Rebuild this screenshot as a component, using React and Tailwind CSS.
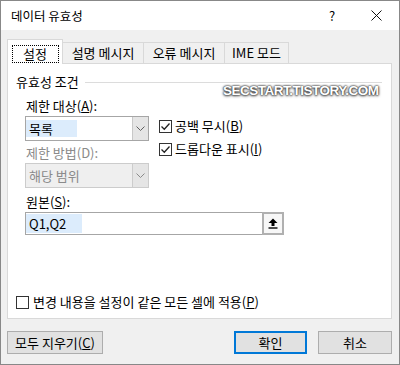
import React from 'react'

function Check({ checked }) {
  return (
    <span className="w-[13px] h-[13px] border border-[#333] bg-white flex items-center justify-center shrink-0">
      {checked && (
        <svg width="11" height="11" viewBox="0 0 11 11">
          <path d="M1.5 5.5 L4.3 8.3 L9.5 2.5" fill="none" stroke="#222" strokeWidth="1.3" />
        </svg>
      )}
    </span>
  )
}

function Chevron({ color = '#606060' }) {
  return (
    <svg width="9" height="5" viewBox="0 0 9 5">
      <path d="M0.5 0.5 L4.5 4.5 L8.5 0.5" fill="none" stroke={color} strokeWidth="1" />
    </svg>
  )
}

function Combo({ value, disabled }) {
  return (
    <div className={`h-[25px] w-[124px] flex border ${disabled ? 'border-[#cccccc] bg-[#efefef]' : 'border-[#a6a6a6] bg-white'}`}>
      <div className="flex-1 flex items-center">
        <span className={`h-[17px] w-[51px] flex items-center pl-[3px] whitespace-nowrap leading-none ${disabled ? 'text-[#8a8a8a]' : 'bg-[#dcecfc]'}`}>
          {value}
        </span>
      </div>
      <div className={`w-[16px] flex items-center justify-center border-l ${disabled ? 'border-[#cccccc] bg-[#e5e5e5]' : 'border-[#c8c8c8] bg-[#e5e5e5]'}`}>
        <Chevron color={disabled ? '#8a8a8a' : '#606060'} />
      </div>
    </div>
  )
}

export default function App() {
  return (
    <div className="w-[400px] h-[365px] border border-[#888] flex flex-col text-[13px] text-black [font-family:'Noto_Sans_CJK_KR','Malgun_Gothic',sans-serif] leading-[16px]">
      {/* Title bar */}
      <div className="h-[29px] bg-white flex items-center pl-[10px]">
        <span className="flex-1 text-[12.5px]">데이터 유효성</span>
        <span className="w-[20px] text-center mr-[24px] text-[13px]">?</span>
        <span className="w-[20px] flex justify-center mr-[13px]">
          <svg width="11" height="11" viewBox="0 0 11 11">
            <path d="M0.5 0.5 L10.5 10.5 M10.5 0.5 L0.5 10.5" stroke="#111" strokeWidth="1" />
          </svg>
        </span>
      </div>

      {/* Body */}
      <div className="flex-1 bg-[#f0f0f0] pl-[6px] pr-[7px] flex flex-col">
        {/* Tabs */}
        <div className="mt-[9px] h-[24px] flex items-end">
          <div className="relative z-10 -mb-px h-[25px] w-[56px] bg-white border border-b-0 border-[#d9d9d9] flex items-center justify-center">
            <span className="border border-dotted border-black w-[47px] h-[18px] flex items-center justify-center mt-[3px]">설정</span>
          </div>
          <div className="h-[21px] w-[81px] border border-l-0 border-b-0 border-[#d9d9d9] flex items-center justify-center">설명 메시지</div>
          <div className="h-[21px] w-[81px] border border-l-0 border-b-0 border-[#d9d9d9] flex items-center justify-center">오류 메시지</div>
          <div className="h-[21px] w-[64px] border border-l-0 border-b-0 border-[#d9d9d9] flex items-center justify-center">IME 모드</div>
        </div>

        {/* Panel */}
        <div className="relative h-[256px] bg-white border border-[#d9d9d9] flex flex-col">
          <div className="absolute left-[215px] top-[19px] text-[13.5px] font-bold tracking-[-0.5px] text-white [font-family:'Liberation_Sans',sans-serif] [text-shadow:0_0_2px_#333,0_0_2px_#333,0_1px_3px_#555]">
            SECSTART.TISTORY.COM
          </div>

          <div className="mt-[10px] ml-[8px] mr-[9px] h-[16px] flex items-center">
            <span>유효성 조건</span>
            <div className="flex-1 h-px bg-[#dcdcdc] ml-[6px]" />
          </div>

          <div className="mt-[8px] pl-[17px] flex">
            <div className="flex flex-col w-[124px]">
              <span className="h-[16px] pl-[1px] whitespace-nowrap">제한 대상(<u>A</u>):</span>
              <div className="mt-[2px]">
                <Combo value="목록" />
              </div>
              <span className="mt-[4px] h-[16px] pl-[1px] text-[#8a8a8a] whitespace-nowrap">제한 방법(D):</span>
              <div className="mt-[2px]">
                <Combo value="해당 범위" disabled />
              </div>
            </div>
            <div className="ml-[10px] pt-[20px] flex flex-col gap-[7px]">
              <label className="flex items-center gap-[3px] h-[16px]">
                <Check checked />
                <span>공백 무시(<u>B</u>)</span>
              </label>
              <label className="flex items-center gap-[3px] h-[16px]">
                <Check checked />
                <span>드롭다운 표시(<u>I</u>)</span>
              </label>
            </div>
          </div>

          <span className="mt-[6px] ml-[18px] h-[16px]">원본(<u>S</u>):</span>
          <div className="mt-[2px] ml-[17px] w-[259px] h-[23px] flex border border-[#a6a6a6] bg-white">
            <div className="flex-1 flex items-center">
              <span className="h-[19px] w-[56px] flex items-center pl-[3px] bg-[#dcecfc]">Q1,Q2</span>
            </div>
            <div className="w-[22px] -my-px -mr-px border-2 border-[#b0b0b0] bg-[#f7f7f7] flex items-center justify-center">
              <svg width="10" height="11" viewBox="0 0 10 11">
                <path d="M5 0.5 L9.5 5 L6.5 5 L6.5 8 L3.5 8 L3.5 5 L0.5 5 Z" fill="#000" />
                <rect x="0.5" y="9.3" width="9" height="1.4" fill="#000" />
              </svg>
            </div>
          </div>

          <div className="flex-1" />

          <label className="mb-[8px] ml-[8px] h-[16px] flex items-center gap-[4px]">
            <Check />
            <span>변경 내용을 설정이 같은 모든 셀에 적용(<u>P</u>)</span>
          </label>
        </div>

        {/* Buttons */}
        <div className="mt-[12px] flex justify-between">
          <button className="h-[23px] w-[96px] bg-[#e1e1e1] border border-[#adadad] flex items-center justify-center">
            모두 지우기(<u>C</u>)
          </button>
          <div className="flex gap-[11px]">
            <button className="h-[23px] w-[73px] bg-[#e1e1e1] border-2 border-[#0078d7] flex items-center justify-center">
              확인
            </button>
            <button className="h-[23px] w-[74px] bg-[#e1e1e1] border border-[#adadad] flex items-center justify-center">
              취소
            </button>
          </div>
        </div>
      </div>
    </div>
  )
}
